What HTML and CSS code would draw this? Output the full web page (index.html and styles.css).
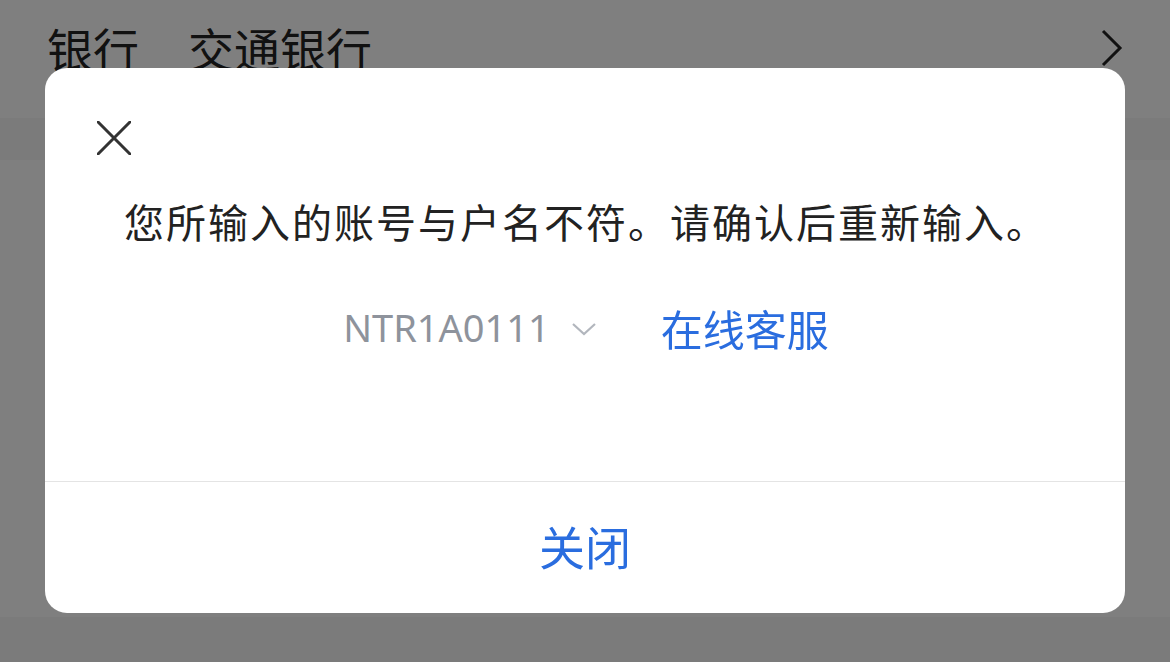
FILE: index.html
```html
<!DOCTYPE html>
<html lang="zh-CN">

<head>
    <meta charset="UTF-8">
    <meta name="viewport" content="width=device-width, initial-scale=1.0">
    <title>账号校验</title>
    <link rel="stylesheet" href="styles.css">
</head>

<body>

    <div class="page">
        <div class="row-header">
            <span class="label">银行</span>
            <span class="value">交通银行</span>
            <svg class="arrow-right" width="24" height="40" viewBox="0 0 24 40">
                <polyline points="3,3 20,20 3,37" fill="none" stroke="#222" stroke-width="3" />
            </svg>
        </div>
        <div class="section"></div>
    </div>

    <div class="mask"></div>

    <div class="dialog">
        <div class="dialog-body">
            <svg class="close-icon" width="34" height="34" viewBox="0 0 34 34">
                <path d="M1 1 L33 33 M33 1 L1 33" stroke="#333" stroke-width="3" stroke-linecap="round" />
            </svg>
            <p class="message">您所输入的账号与户名不符。请确认后重新输入。</p>
            <div class="actions">
                <span class="code">NTR1A0111</span>
                <svg class="arrow-down" width="26" height="16" viewBox="0 0 26 16">
                    <polyline points="2,3 13,13 24,3" fill="none" stroke="#b2b6bd" stroke-width="2.2" />
                </svg>
                <a class="service">在线客服</a>
            </div>
        </div>
        <div class="dialog-footer">
            <button class="btn-close">关闭</button>
        </div>
    </div>

</body>

</html>
```

FILE: styles.css
```css
body {
    margin: 0;
    background-color: #f6f6f6;
    font-family: "Noto Sans CJK SC", "Noto Sans", sans-serif;
    color: #222;
    overflow: hidden;
}

.page {
    height: 662px;
}

.row-header {
    height: 118px;
    background: #fff;
    display: flex;
    align-items: flex-start;
    padding: 14px 46px 0 47px;
    box-sizing: border-box;
    font-size: 46px;
    line-height: 66px;
}

.label {
    width: 141px;
}

.value {
    flex: 1;
}

.arrow-right {
    margin-top: 14px;
}

.section {
    margin-top: 42px;
    height: 457px;
    background: #fff;
}

/* dimmed layer over the page */
.mask {
    position: fixed;
    inset: 0;
    background: rgba(0, 0, 0, 0.5);
}

.dialog {
    position: fixed;
    top: 68px;
    left: 45px;
    width: 1080px;
    height: 545px;
    background: #fff;
    border-radius: 22px;
    display: flex;
    flex-direction: column;
}

.dialog-body {
    flex: 1;
    padding: 53px 0 0 52px;
}

.close-icon {
    display: block;
}

.message {
    margin: 38px 0 0 27px;
    font-size: 40px;
    line-height: 56px;
    color: #222;
    letter-spacing: 2px;
}

.actions {
    margin-top: 50px;
    display: flex;
    align-items: center;
    justify-content: center;
    margin-left: -52px;
    height: 56px;
    padding-left: 2px;
}

.code {
    font-family: "Noto Sans", sans-serif;
    font-size: 38px;
    color: #8e939c;
}

.arrow-down {
    margin: 4px 0 0 21px;
}

.service {
    margin-left: 64px;
    font-size: 42px;
    color: #2a6ddf;
}

.dialog-footer {
    height: 132px;
    border-top: 1px solid #e4e4e4;
    display: flex;
    align-items: center;
    justify-content: center;
    padding-bottom: 6px;
    box-sizing: border-box;
}

.btn-close {
    background: none;
    border: none;
    padding: 0;
    font-family: "Noto Sans CJK SC", sans-serif;
    font-size: 46px;
    color: #2a6ddf;
    cursor: pointer;
}
```
